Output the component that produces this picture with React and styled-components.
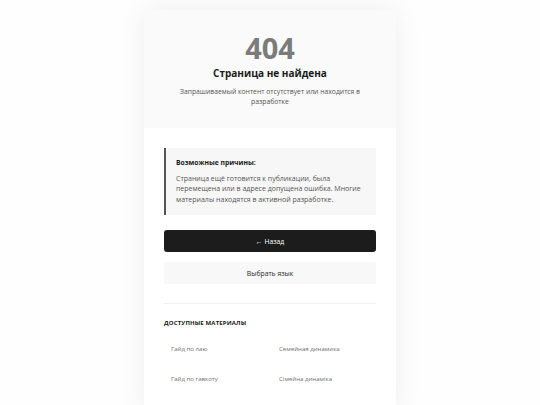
import React from 'react'
import styled, { createGlobalStyle } from 'styled-components'

const GlobalStyle = createGlobalStyle`
  html, body {
    margin: 0;
    padding: 0;
    background: #fefefe;
    font-family: "Open Sans", "Liberation Sans", sans-serif;
  }
`

const Page = styled.div`
  display: flex;
  justify-content: center;
  padding-top: 10px;
  min-height: 395px;
`

const Card = styled.div`
  width: 252px;
  background: #ffffff;
  border-radius: 6px;
  box-shadow: 0 0 28px rgba(0, 0, 0, 0.07);
  overflow: hidden;
`

const Header = styled.div`
  background: #fafafa;
  padding: 23px 20px 20px;
  text-align: center;
`

const Code = styled.div`
  font-size: 29px;
  line-height: 1;
  font-weight: 700;
  color: #7b7b7b;
`

const Title = styled.h1`
  margin: 4px 0 0;
  font-size: 10px;
  line-height: 14px;
  font-weight: 700;
  color: #1a1a1a;
`

const Subtitle = styled.p`
  margin: 6.5px 0 0;
  font-size: 6.8px;
  line-height: 10.5px;
  color: #555;
`

const Body = styled.div`
  padding: 20px 20px 20px;
`

const Reasons = styled.div`
  background: #f7f7f7;
  border-left: 2px solid #555;
  padding: 10px 10px 10px 10px;
`

const ReasonsTitle = styled.div`
  font-size: 6.8px;
  line-height: 10px;
  font-weight: 700;
  color: #1a1a1a;
`

const ReasonsText = styled.p`
  margin: 6px 0 0;
  font-size: 7px;
  line-height: 10.5px;
  color: #555;
`

const Button = styled.button`
  display: block;
  width: 100%;
  height: 22px;
  margin-top: ${p => p.$gap}px;
  border: none;
  border-radius: 3px;
  font-family: inherit;
  font-size: 6.8px;
  background: ${p => (p.$primary ? '#1c1c1c' : '#f8f8f8')};
  color: ${p => (p.$primary ? '#ffffff' : '#2a2a2a')};
  cursor: pointer;
`

const Divider = styled.hr`
  margin: 19px 0 0;
  border: none;
  border-top: 1px solid #efefef;
`

const SectionTitle = styled.div`
  margin-top: 14px;
  font-size: 6px;
  line-height: 10px;
  font-weight: 700;
  letter-spacing: 0.15px;
  text-transform: uppercase;
  color: #1a1a1a;
`

const Grid = styled.div`
  display: grid;
  grid-template-columns: 1fr 1fr;
  column-gap: 4px;
  margin-top: 6px;
`

const Item = styled.div`
  padding: 8px 7px;
  font-size: 6.1px;
  line-height: 14px;
  color: #707070;
  cursor: pointer;
`

const materials = ['Гайд по лаю', 'Семейная динамика', 'Гайд по гавкоту', 'Сімейна динаміка']

export default function App() {
  return (
    <>
      <GlobalStyle />
      <Page>
        <Card>
          <Header>
            <Code>404</Code>
            <Title>Страница не найдена</Title>
            <Subtitle>Запрашиваемый контент отсутствует или находится в разработке</Subtitle>
          </Header>
          <Body>
            <Reasons>
              <ReasonsTitle>Возможные причины:</ReasonsTitle>
              <ReasonsText>
                Страница ещё готовится к публикации, была перемещена или в адресе допущена ошибка. Многие материалы находятся в активной разработке.
              </ReasonsText>
            </Reasons>
            <Button $primary $gap={15}>← Назад</Button>
            <Button $gap={10}>Выбрать язык</Button>
            <Divider />
            <SectionTitle>Доступные материалы</SectionTitle>
            <Grid>
              {materials.map(m => (
                <Item key={m}>{m}</Item>
              ))}
            </Grid>
          </Body>
        </Card>
      </Page>
    </>
  )
}
